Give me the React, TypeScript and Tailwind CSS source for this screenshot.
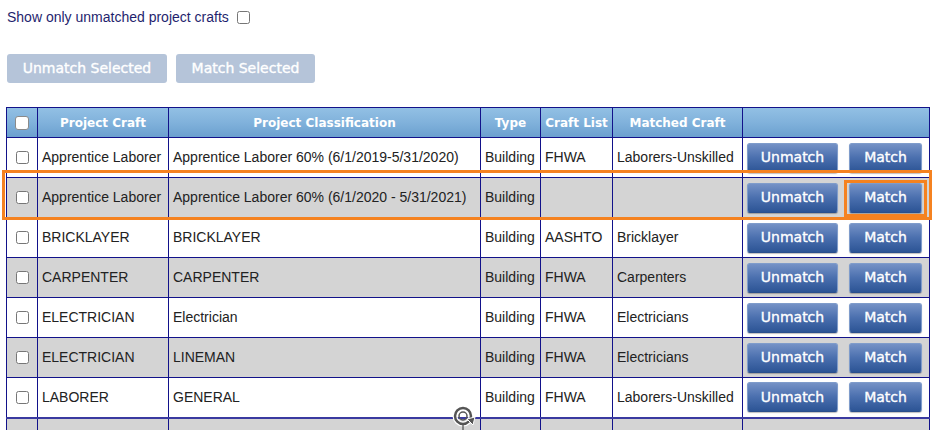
import React from 'react';

type Row = {
    craft: string;
    classification: string;
    type: string;
    list: string;
    matched: string;
};

const rows: Row[] = [
    { craft: 'Apprentice Laborer', classification: 'Apprentice Laborer 60% (6/1/2019-5/31/2020)', type: 'Building', list: 'FHWA', matched: 'Laborers-Unskilled' },
    { craft: 'Apprentice Laborer', classification: 'Apprentice Laborer 60% (6/1/2020 - 5/31/2021)', type: 'Building', list: '', matched: '' },
    { craft: 'BRICKLAYER', classification: 'BRICKLAYER', type: 'Building', list: 'AASHTO', matched: 'Bricklayer' },
    { craft: 'CARPENTER', classification: 'CARPENTER', type: 'Building', list: 'FHWA', matched: 'Carpenters' },
    { craft: 'ELECTRICIAN', classification: 'Electrician', type: 'Building', list: 'FHWA', matched: 'Electricians' },
    { craft: 'ELECTRICIAN', classification: 'LINEMAN', type: 'Building', list: 'FHWA', matched: 'Electricians' },
    { craft: 'LABORER', classification: 'GENERAL', type: 'Building', list: 'FHWA', matched: 'Laborers-Unskilled' },
];

const verdana = { fontFamily: '"DejaVu Sans", Verdana, sans-serif' };

function RowButton({ label, width }: { label: string; width: string }) {
    return (
        <button
            type="button"
            className={`${width} h-[30px] rounded-[3px] border border-[#7f9ccb] border-b-[#2a4f8c] bg-gradient-to-b from-[#7592c6] via-[#4a6fae] to-[#2c5495] text-white text-[14px] [-webkit-text-stroke:0.35px_white] shadow-[0_1px_1px_rgba(0,0,0,0.25)]`}
            style={verdana}
        >
            {label}
        </button>
    );
}

export default function App() {
    return (
        <div className="w-[937px] h-[430px] overflow-hidden bg-white text-[14px]" style={{ fontFamily: '"Liberation Sans", Arial, sans-serif' }}>
            <div className="flex items-center gap-[8px] pl-[7px] pt-[8px] h-[26px]">
                <span className="text-[#1f1f6e]">Show only unmatched project crafts</span>
                <input type="checkbox" className="w-[13px] h-[13px] m-0" />
            </div>

            <div className="flex gap-[9px] pl-[7px] mt-[28px]">
                <button
                    type="button"
                    className="w-[160px] h-[29px] rounded-[3px] bg-[#b5c4d9] text-white text-[14px] [-webkit-text-stroke:0.35px_white]"
                    style={verdana}
                >
                    Unmatch Selected
                </button>
                <button
                    type="button"
                    className="w-[139px] h-[29px] rounded-[3px] bg-[#b5c4d9] text-white text-[14px] [-webkit-text-stroke:0.35px_white]"
                    style={verdana}
                >
                    Match Selected
                </button>
            </div>

            <div className="relative mt-[24px]">
                <table className="ml-[6px] w-[923px] table-fixed border-collapse border border-[#12128a] text-[#222]">
                    <colgroup>
                        <col className="w-[31px]" />
                        <col className="w-[131px]" />
                        <col className="w-[312px]" />
                        <col className="w-[60px]" />
                        <col className="w-[72px]" />
                        <col className="w-[130px]" />
                        <col className="w-[187px]" />
                    </colgroup>
                    <thead>
                        <tr className="h-[30px] bg-gradient-to-b from-[#92c0e4] via-[#80b1db] to-[#6a9fce] text-white text-[12px] font-bold" style={verdana}>
                            <th className="border border-[#12128a] p-0">
                                <div className="flex justify-center">
                                    <span className="block w-[14px] h-[14px] rounded-[3px] bg-white border border-[#8a8a8a]" />
                                </div>
                            </th>
                            <th className="border border-[#12128a]">Project Craft</th>
                            <th className="border border-[#12128a]">Project Classification</th>
                            <th className="border border-[#12128a]">Type</th>
                            <th className="border border-[#12128a] px-0">Craft List</th>
                            <th className="border border-[#12128a]">Matched Craft</th>
                            <th className="border border-[#12128a]"></th>
                        </tr>
                    </thead>
                    <tbody>
                        {rows.map((r, i) => (
                            <tr key={i} className={`h-[40px] ${i % 2 === 1 ? 'bg-[#d4d4d4]' : 'bg-white'}`}>
                                <td className="border border-[#12128a] p-0">
                                    <div className="flex justify-center">
                                        <input type="checkbox" className="w-[13px] h-[13px] m-0" />
                                    </div>
                                </td>
                                <td className="border border-[#12128a] pl-[4px] whitespace-nowrap overflow-hidden">{r.craft}</td>
                                <td className="border border-[#12128a] pl-[4px] whitespace-nowrap overflow-hidden">{r.classification}</td>
                                <td className="border border-[#12128a] pl-[4px] whitespace-nowrap overflow-hidden">{r.type}</td>
                                <td className="border border-[#12128a] pl-[4px] whitespace-nowrap overflow-hidden">{r.list}</td>
                                <td className="border border-[#12128a] pl-[4px] whitespace-nowrap overflow-hidden">{r.matched}</td>
                                <td className="border border-[#12128a] p-0">
                                    <div className="flex items-center gap-[11px] pl-[4px]">
                                        <RowButton label="Unmatch" width="w-[91px]" />
                                        <RowButton label="Match" width="w-[73px]" />
                                    </div>
                                </td>
                            </tr>
                        ))}
                        <tr className="h-[40px] bg-[#d4d4d4] border-t-2 border-[#3a3aa0]">
                            <td className="border border-[#12128a]"></td>
                            <td className="border border-[#12128a]"></td>
                            <td className="border border-[#12128a]"></td>
                            <td className="border border-[#12128a]"></td>
                            <td className="border border-[#12128a]"></td>
                            <td className="border border-[#12128a]"></td>
                            <td className="border border-[#12128a]"></td>
                        </tr>
                    </tbody>
                </table>

                {/* highlight around second row */}
                <div className="absolute left-[2px] top-[63px] w-[930px] h-[50px] border-[3px] border-[#f58220] pointer-events-none" />
                <div className="absolute left-[844px] top-[73px] w-[83px] h-[37px] border-[3px] border-[#f58220] pointer-events-none" />

                {/* rotate cursor */}
                <svg className="absolute left-[451px] top-[297px]" width="28" height="28" viewBox="0 0 28 28">
                    <circle cx="12" cy="12" r="8" fill="none" stroke="#fff" strokeWidth="5" />
                    <circle cx="12" cy="12" r="8" fill="none" stroke="#555" strokeWidth="2.5" />
                    <circle cx="12" cy="12" r="4" fill="none" stroke="#555" strokeWidth="1.5" />
                    <path d="M16 15 L24 13 L22 21 Z" fill="#555" stroke="#fff" strokeWidth="1" />
                    <line x1="12" y1="21" x2="12" y2="28" stroke="#333" strokeWidth="1" />
                </svg>
            </div>
        </div>
    );
}
